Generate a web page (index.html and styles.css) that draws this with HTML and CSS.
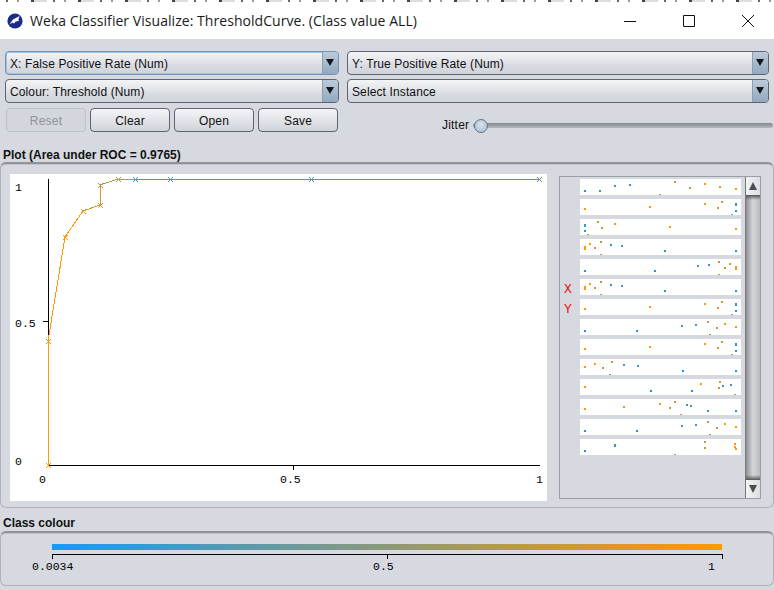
FILE: index.html
```html
<!DOCTYPE html>
<html lang="en">
<head>
<meta charset="utf-8">
<title>Weka Classifier Visualize: ThresholdCurve. (Class value ALL)</title>
<link rel="stylesheet" href="styles.css">
</head>
<body>
<div class="window">
  <div class="strip"></div>
  <header class="titlebar">
    <svg class="logo" viewBox="0 0 16 16" width="16" height="16">
      <circle cx="8" cy="8" r="7.6" fill="#1c2c86"/>
      <path d="M2.6 11.2 6 6.6 12.6 3 11.4 6.6 12 8 8.6 8.6 7 10.8 6 9.6Z" fill="#fff"/>
    </svg>
    <span class="title">Weka Classifier Visualize: ThresholdCurve. (Class value ALL)</span>
    <div class="winctl">
      <svg class="winicon" viewBox="0 0 12 12"><path d="M0 6.5H12"/></svg>
      <svg class="winicon" viewBox="0 0 12 12"><path d="M.5 .5H11.5V11.5H.5Z"/></svg>
      <svg class="winicon" viewBox="0 0 12 12"><path d="M0 0 12 12M12 0 0 12"/></svg>
    </div>
  </header>

  <section class="toolbar">
    <div class="combo focus"><span class="combo-text">X: False Positive Rate (Num)</span><span class="combo-btn"></span></div>
    <div class="combo"><span class="combo-text">Y: True Positive Rate (Num)</span><span class="combo-btn"></span></div>
    <div class="combo"><span class="combo-text">Colour: Threshold (Num)</span><span class="combo-btn"></span></div>
    <div class="combo"><span class="combo-text">Select Instance</span><span class="combo-btn"></span></div>
    <div class="actions">
      <button class="btn disabled" type="button">Reset</button>
      <button class="btn" type="button">Clear</button>
      <button class="btn" type="button">Open</button>
      <button class="btn" type="button">Save</button>
      <div class="jitter">
        <span class="jitter-label">Jitter</span>
        <div class="track"><span class="thumb"></span></div>
      </div>
    </div>
  </section>

  <h2 class="caption plot-caption">Plot (Area under ROC = 0.9765)</h2>
  <section class="panel plot-panel">
    <svg class="plot" width="537" height="327" viewBox="10 174 537 327">
      <g class="axis">
        <path d="M48.5 179V465.5H540M43 321.5H48M293.5 465V470"/>
      </g>
      <g class="plot-text">
        <text x="15" y="191">1</text>
        <text x="15" y="327">0.5</text>
        <text x="15" y="465">0</text>
        <text x="39" y="483">0</text>
        <text x="280" y="483">0.5</text>
        <text x="536" y="483">1</text>
      </g>
      <g class="curve">
        <path stroke="#ff9900" d="M48 465V341L65 237 83 211M46 463l5 5M51 463l-5 5M46 339l5 5M51 339l-5 5M63 235l5 5M68 235l-5 5"/>
        <path stroke="#d5982a" d="M83 211 100 205M81 209l5 5M86 209l-5 5"/>
        <path stroke="#cc9a30" d="M100 205V185M98 203l5 5M103 203l-5 5"/>
        <path stroke="#b39a48" d="M100 185 118 179M98 183l5 5M103 183l-5 5"/>
        <path stroke="#a89a60" d="M118 179H135M116 177l5 5M121 177l-5 5"/>
        <path stroke="#4598c8" d="M135 179H539M133 177l5 5M138 177l-5 5M168 177l5 5M173 177l-5 5M309 177l5 5M314 177l-5 5M537 177l5 5M542 177l-5 5"/>
      </g>
    </svg>

    <div class="matrix">
      <div class="rows">
        <div class="row"><span class="axis-tag"></span><svg class="cell" width="161" height="16" viewBox="0 0 161 16"><path class="b" d="M4 11h2v2h-2zM19 11h2v2h-2z"/><path class="t" d="M34 6h2v2h-2zM49 5h2v2h-2z"/><path class="n" d="M94 2h2v2h-2zM109 8h2v2h-2z"/><path class="o" d="M124 4h2v2h-2zM139 7h2v2h-2zM155 9h2v2h-2z"/><path class="l" d="M79 15h2v1h-2z"/></svg></div>
        <div class="row"><span class="axis-tag"></span><svg class="cell" width="161" height="16" viewBox="0 0 161 16"><path class="o" d="M4 9h2v2h-2zM69 7h2v2h-2zM124 4h2v2h-2z"/><path class="n" d="M141 2h2v2h-2zM137 8h2v2h-2z"/><path class="t" d="M155 4h2v3h-2z"/><path class="b" d="M155 11h2v2h-2z"/><path class="l" d="M151 15h2v1h-2z"/></svg></div>
        <div class="row"><span class="axis-tag"></span><svg class="cell" width="161" height="16" viewBox="0 0 161 16"><path class="t" d="M4 5h2v3h-2z"/><path class="b" d="M4 11h2v2h-2z"/><path class="n" d="M17 2h2v2h-2zM21 8h2v2h-2z"/><path class="o" d="M34 4h2v2h-2zM89 7h2v2h-2zM155 9h2v2h-2z"/><path class="l" d="M7 15h2v1h-2z"/></svg></div>
        <div class="row"><span class="axis-tag"></span><svg class="cell" width="161" height="16" viewBox="0 0 161 16"><path class="o" d="M4 7h2v4h-2zM9 4h2v2h-2z"/><path class="n" d="M14 8h2v2h-2zM20 2h2v2h-2z"/><path class="t" d="M30 5h2v2h-2zM41 6h2v2h-2z"/><path class="b" d="M84 11h2v2h-2zM155 11h2v2h-2z"/><path class="l" d="M20 15h2v1h-2z"/></svg></div>
        <div class="row"><span class="axis-tag"></span><svg class="cell" width="161" height="16" viewBox="0 0 161 16"><path class="b" d="M4 11h2v2h-2zM74 11h2v2h-2z"/><path class="t" d="M117 6h2v2h-2zM128 5h2v2h-2z"/><path class="n" d="M138 2h2v2h-2zM144 8h2v2h-2z"/><path class="o" d="M149 4h2v2h-2zM155 7h2v4h-2z"/><path class="l" d="M138 15h2v1h-2z"/></svg></div>
        <div class="row"><span class="axis-tag">X</span><svg class="cell" width="161" height="16" viewBox="0 0 161 16"><path class="o" d="M4 7h2v4h-2zM9 4h2v2h-2z"/><path class="n" d="M14 8h2v2h-2zM20 2h2v2h-2z"/><path class="t" d="M30 5h2v2h-2zM41 6h2v2h-2z"/><path class="b" d="M84 11h2v2h-2zM155 11h2v2h-2z"/><path class="l" d="M20 15h2v1h-2z"/></svg></div>
        <div class="row"><span class="axis-tag">Y</span><svg class="cell" width="161" height="16" viewBox="0 0 161 16"><path class="o" d="M4 9h2v2h-2zM69 7h2v2h-2zM124 4h2v2h-2z"/><path class="n" d="M141 2h2v2h-2zM137 8h2v2h-2z"/><path class="t" d="M155 4h2v3h-2z"/><path class="b" d="M155 11h2v2h-2z"/><path class="l" d="M151 15h2v1h-2z"/></svg></div>
        <div class="row"><span class="axis-tag"></span><svg class="cell" width="161" height="16" viewBox="0 0 161 16"><path class="b" d="M4 11h2v2h-2zM56 11h2v2h-2z"/><path class="t" d="M101 6h2v2h-2zM115 5h2v2h-2z"/><path class="n" d="M127 2h2v2h-2zM136 8h2v2h-2z"/><path class="o" d="M144 4h2v2h-2zM155 7h2v2h-2z"/><path class="l" d="M129 15h2v1h-2z"/></svg></div>
        <div class="row"><span class="axis-tag"></span><svg class="cell" width="161" height="16" viewBox="0 0 161 16"><path class="o" d="M4 9h2v2h-2zM69 7h2v2h-2zM124 4h2v2h-2z"/><path class="n" d="M141 2h2v2h-2zM137 8h2v2h-2z"/><path class="t" d="M155 4h2v3h-2z"/><path class="b" d="M155 11h2v2h-2z"/><path class="l" d="M151 15h2v1h-2z"/></svg></div>
        <div class="row"><span class="axis-tag"></span><svg class="cell" width="161" height="16" viewBox="0 0 161 16"><path class="o" d="M4 7h2v2h-2zM14 4h2v2h-2z"/><path class="n" d="M22 8h2v2h-2zM31 2h2v2h-2z"/><path class="t" d="M43 5h2v2h-2zM57 6h2v2h-2z"/><path class="b" d="M102 11h2v2h-2zM155 11h2v2h-2z"/><path class="l" d="M29 15h2v1h-2z"/></svg></div>
        <div class="row"><span class="axis-tag"></span><svg class="cell" width="161" height="16" viewBox="0 0 161 16"><path class="o" d="M4 7h2v2h-2zM120 4h2v2h-2z"/><path class="b" d="M70 11h2v2h-2zM111 11h2v2h-2z"/><path class="n" d="M139 2h2v2h-2zM138 8h2v2h-2z"/><path class="t" d="M142 6h2v2h-2zM150 5h2v2h-2z"/><path class="l" d="M154 15h2v1h-2z"/></svg></div>
        <div class="row"><span class="axis-tag"></span><svg class="cell" width="161" height="16" viewBox="0 0 161 16"><path class="o" d="M4 9h2v2h-2zM43 7h2v2h-2zM79 4h2v2h-2z"/><path class="n" d="M94 2h2v2h-2zM89 8h2v2h-2z"/><path class="t" d="M106 5h2v2h-2zM110 6h2v2h-2z"/><path class="b" d="M127 11h2v2h-2zM155 11h2v2h-2z"/><path class="l" d="M100 15h2v1h-2z"/></svg></div>
        <div class="row"><span class="axis-tag"></span><svg class="cell" width="161" height="16" viewBox="0 0 161 16"><path class="b" d="M4 11h2v2h-2zM56 11h2v2h-2z"/><path class="t" d="M101 6h2v2h-2zM115 5h2v2h-2z"/><path class="n" d="M127 2h2v2h-2zM136 8h2v2h-2z"/><path class="o" d="M144 4h2v2h-2zM155 7h2v2h-2z"/><path class="l" d="M129 15h2v1h-2z"/></svg></div>
        <div class="row"><span class="axis-tag"></span><svg class="cell" width="161" height="16" viewBox="0 0 161 16"><path class="b" d="M4 11h2v2h-2z"/><path class="t" d="M34 5h2v3h-2z"/><path class="n" d="M124 2h2v2h-2zM124 8h2v2h-2z"/><path class="o" d="M154 4h2v2h-2zM154 7h2v2h-2zM155 9h2v2h-2z"/><path class="l" d="M94 15h2v1h-2z"/></svg></div>
      </div>
      <div class="scrollbar">
        <div class="sb-btn sb-up"><span class="tri-up"></span></div>
        <div class="sb-track"></div>
        <div class="sb-btn sb-down"><span class="tri-down"></span></div>
      </div>
    </div>
  </section>

  <h2 class="caption colour-caption">Class colour</h2>
  <section class="panel colour-panel">
    <svg class="legend" width="772" height="52" viewBox="1 532 772 52">
      <defs>
        <linearGradient id="classGrad">
          <stop offset="0" stop-color="#1a99f2"/>
          <stop offset="1" stop-color="#ff9900"/>
        </linearGradient>
      </defs>
      <rect x="52" y="543" width="670" height="6" fill="url(#classGrad)"/>
      <path class="legend-axis" d="M52.5 558V553.5H722.5V558M387.5 553.5V558"/>
      <g class="plot-text">
        <text x="32" y="569">0.0034</text>
        <text x="373" y="569">0.5</text>
        <text x="708" y="569">1</text>
      </g>
    </svg>
  </section>
</div>
</body>
</html>
```

FILE: styles.css
```css
* { box-sizing: border-box; }

html, body {
  margin: 0;
  padding: 0;
  background: #d6d9e0;
}

.window {
  width: 774px;
  height: 590px;
  overflow: hidden;
  background: #d6d9e0;
  font-family: "Liberation Sans", Arial, sans-serif;
  font-size: 12px;
  color: #111;
}

.strip {
  height: 2px;
  background: repeating-linear-gradient(90deg, #fff 0 6px, #666 6px 8px, #fff 8px 17px, #999 17px 19px, #fff 19px 31px, #444 31px 34px, #ddd 34px 47px);
}

.titlebar {
  height: 37px;
  background: #fff;
  display: flex;
  align-items: center;
  padding-left: 7px;
  padding-right: 20px;
}

.logo { margin-right: 7px; flex: none; }

.title {
  font-family: "Open Sans", "Noto Sans", sans-serif;
  font-size: 14px;
  letter-spacing: .05px;
  color: #1a1a1a;
  white-space: nowrap;
}

.winctl {
  margin-left: auto;
  display: flex;
  gap: 47px;
}

.winicon {
  width: 12px;
  height: 12px;
  fill: none;
  stroke: #111;
  stroke-width: 1;
  display: block;
}

.toolbar {
  padding: 12px 0 0 5px;
  display: grid;
  grid-template-columns: 334px 422px;
  column-gap: 8px;
  row-gap: 4px;
}

.combo {
  height: 24px;
  border: 1px solid #5e6570;
  border-radius: 4px;
  background: linear-gradient(#f3f4f6 0, #e6e8ec 35%, #d9dce2 60%, #d0d3da 100%);
  display: flex;
  align-items: center;
  overflow: hidden;
}

.combo.focus {
  border-color: #6f94bd;
  box-shadow: 0 0 0 1px #a8c0d8 inset;
}

.combo-text {
  flex: 1;
  padding: 1px 0 0 4px;
  font-size: 12px;
  letter-spacing: .12px;
  white-space: nowrap;
}

.combo-btn {
  width: 16px;
  height: 100%;
  border-left: 1px solid #8f9fb0;
  background: linear-gradient(#bccad9, #92a9c1);
  position: relative;
  flex: none;
}

.combo-btn::after {
  content: "";
  position: absolute;
  left: 3px;
  top: 7px;
  border-left: 4.5px solid transparent;
  border-right: 4.5px solid transparent;
  border-top: 7px solid #15171c;
}

.actions {
  grid-column: 1 / -1;
  height: 24px;
  margin-top: 1px;
  padding-left: 1px;
  display: flex;
  gap: 4px;
  align-items: flex-start;
}

.btn {
  flex: none;
  width: 80px;
  height: 24px;
  padding: 1px 0 0;
  border: 1px solid #5e6570;
  border-radius: 4px;
  background: linear-gradient(#f4f5f7 0, #e6e8ec 40%, #cfd2d9 100%);
  font-family: inherit;
  font-size: 12px;
  letter-spacing: .2px;
  color: #111;
}

.btn.disabled {
  border-color: #bcc0c8;
  background: #d3d6dc;
  color: #909399;
}

.jitter {
  flex: none;
  margin-left: 100px;
  display: flex;
  align-items: center;
  height: 34px;
  width: 331px;
}

.jitter-label {
  width: 31px;
  letter-spacing: .2px;
}

.track {
  width: 300px;
  height: 5px;
  border-radius: 3px;
  background: linear-gradient(#84888f, #b4b7bd);
  position: relative;
}

.thumb {
  position: absolute;
  left: 1px;
  top: -4px;
  width: 14px;
  height: 14px;
  border-radius: 50%;
  border: 1px solid #5f7690;
  background: radial-gradient(circle at 50% 40%, #dbe3ec, #a4b7cb);
}

.caption {
  margin: 0;
  font-size: 12px;
  line-height: 14px;
  font-weight: bold;
  padding-left: 3px;
  color: #111;
}

.plot-caption { margin-top: 16px; }
.colour-caption { margin-top: 8px; }

.panel {
  width: 774px;
  border: 1px solid #b0b3ba;
  border-top: 2px solid #8f9299;
  border-radius: 6px;
  background: #d6d9e0;
  box-shadow: 0 1px 0 #c2c5cb inset;
}

.plot-panel {
  height: 346px;
  padding: 10px 0 0 9px;
  display: flex;
  align-items: flex-start;
}

.plot {
  display: block;
  background: #fff;
  flex: none;
}

.axis path {
  fill: none;
  stroke: #000;
  stroke-width: 1;
  shape-rendering: crispEdges;
}

.plot-text text {
  font-family: "Liberation Mono", monospace;
  font-size: 11.5px;
  fill: #000;
}

.curve path {
  fill: none;
  stroke-width: 1;
  shape-rendering: crispEdges;
}

.matrix {
  width: 202px;
  height: 323px;
  margin-left: 12px;
  margin-top: 2px;
  border: 1px solid #9a9da6;
  display: flex;
  justify-content: space-between;
}

.rows {
  padding-top: 2px;
  display: flex;
  flex-direction: column;
  gap: 4px;
}

.row {
  display: flex;
  height: 16px;
  align-items: center;
}

.axis-tag {
  width: 20px;
  padding: 4px 0 0 4px;
  font-family: "Liberation Mono", monospace;
  font-size: 13px;
  color: #e81010;
}

.cell {
  display: block;
  background: #fff;
  shape-rendering: crispEdges;
}

.b { fill: #1a99ec; }
.t { fill: #3a96c4; }
.n { fill: #c89838; }
.o { fill: #ff9900; }
.l { fill: #aa9a50; }

.scrollbar {
  width: 15px;
  display: flex;
  flex-direction: column;
  border-left: 1px solid #777;
}

.sb-btn {
  height: 18px;
  flex: none;
  display: flex;
  justify-content: center;
  align-items: center;
  background: linear-gradient(90deg, #f2f3f5, #dcdee3);
}

.sb-track {
  flex: 1;
  background:
    linear-gradient(#555 0, rgba(120,120,120,0) 5px, rgba(120,120,120,0) calc(100% - 5px), #555 100%),
    linear-gradient(90deg, #8d8f95 0, #d6d7db 50%, #b9bbc0 100%);
}

.tri-up {
  border-left: 4.5px solid transparent;
  border-right: 4.5px solid transparent;
  border-bottom: 8px solid #4a4c52;
}

.tri-down {
  border-left: 4.5px solid transparent;
  border-right: 4.5px solid transparent;
  border-top: 8px solid #4a4c52;
}

.colour-panel {
  height: 55px;
  margin-top: 1px;
}

.legend { display: block; }

.legend-axis {
  fill: none;
  stroke: #000;
  stroke-width: 1;
  shape-rendering: crispEdges;
}
```
